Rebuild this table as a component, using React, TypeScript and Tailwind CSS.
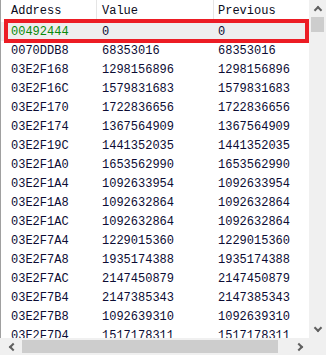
import React from 'react';

const rows: [string, string, string][] = [
  ['00492444', '0', '0'],
  ['0070DDB8', '68353016', '68353016'],
  ['03E2F168', '1298156896', '1298156896'],
  ['03E2F16C', '1579831683', '1579831683'],
  ['03E2F170', '1722836656', '1722836656'],
  ['03E2F174', '1367564909', '1367564909'],
  ['03E2F19C', '1441352035', '1441352035'],
  ['03E2F1A0', '1653562990', '1653562990'],
  ['03E2F1A4', '1092633954', '1092633954'],
  ['03E2F1A8', '1092632864', '1092632864'],
  ['03E2F1AC', '1092632864', '1092632864'],
  ['03E2F7A4', '1229015360', '1229015360'],
  ['03E2F7A8', '1935174388', '1935174388'],
  ['03E2F7AC', '2147450879', '2147450879'],
  ['03E2F7B4', '2147385343', '2147385343'],
  ['03E2F7B8', '1092639310', '1092639310'],
  ['03E2F7D4', '1517178311', '1517178311'],
];

// small scrollbar chevron drawn with two borders of a rotated square
const Chevron = ({ rot }: { rot: string }) => (
  <div className={`w-[6px] h-[6px] border-t-2 border-l-2 border-[#606060] ${rot}`} />
);

export default function App() {
  return (
    <div className="w-[326px] h-[355px] flex flex-col bg-white overflow-hidden text-[12px] leading-none" style={{ fontFamily: '"Liberation Mono", "DejaVu Sans Mono", monospace' }}>
      <div className="flex h-[338px]">
        {/* list */}
        <div className="relative w-[309px] h-full border-l border-[#a0a0a0] overflow-hidden">
          <div className="grid grid-cols-[95px_117px_1fr] h-[22px] items-center text-[#0a0a20]">
            <div className="pl-[10px]">Address</div>
            <div className="h-full flex items-center border-l border-[#e5e5e5] pl-[5px]">Value</div>
            <div className="h-full flex items-center border-l border-[#e5e5e5] pl-[4px]">Previous</div>
          </div>
          {rows.map(([addr, val, prev], i) => (
            <div
              key={i}
              className={`grid grid-cols-[95px_117px_1fr] h-[19px] items-center ${i === 0 ? 'bg-[#eeeeee]' : ''} text-[#0c0c34]`}
            >
              <div className={`pl-[10px] ${i === 0 ? 'text-[#0a8a0a]' : ''}`}>{addr}</div>
              <div className="pl-[6px]">{val}</div>
              <div className="pl-[5px]">{prev}</div>
            </div>
          ))}
          <div className="absolute left-[3px] top-[19px] w-[305px] h-[24px] border-4 border-[#ec1c24]" />
        </div>
        {/* vertical scrollbar */}
        <div className="w-[17px] shrink-0 h-full bg-[#f0f0f0] flex flex-col">
          <div className="h-[17px] flex items-center justify-center pt-[3px]"><Chevron rot="rotate-45" /></div>
          <div className="flex-1 px-[2px]">
            <div className="h-[15px] bg-[#cdcdcd]" />
          </div>
          <div className="h-[17px] flex items-center justify-center pb-[3px]"><Chevron rot="rotate-[225deg]" /></div>
        </div>
      </div>
      <div className="flex h-[17px] shrink-0 bg-[#f0f0f0]">
        <div className="w-[309px] h-full flex items-center">
          <div className="w-[22px] h-full flex items-center justify-center pl-[3px]"><Chevron rot="-rotate-45" /></div>
          <div className="flex-1 h-full py-[2px] pr-[14px]">
            <div className="h-full bg-[#cdcdcd]" />
          </div>
          <div className="w-[17px] h-full flex items-center justify-center pr-[3px]"><Chevron rot="rotate-[135deg]" /></div>
        </div>
        <div className="w-[17px]" />
      </div>
    </div>
  );
}
